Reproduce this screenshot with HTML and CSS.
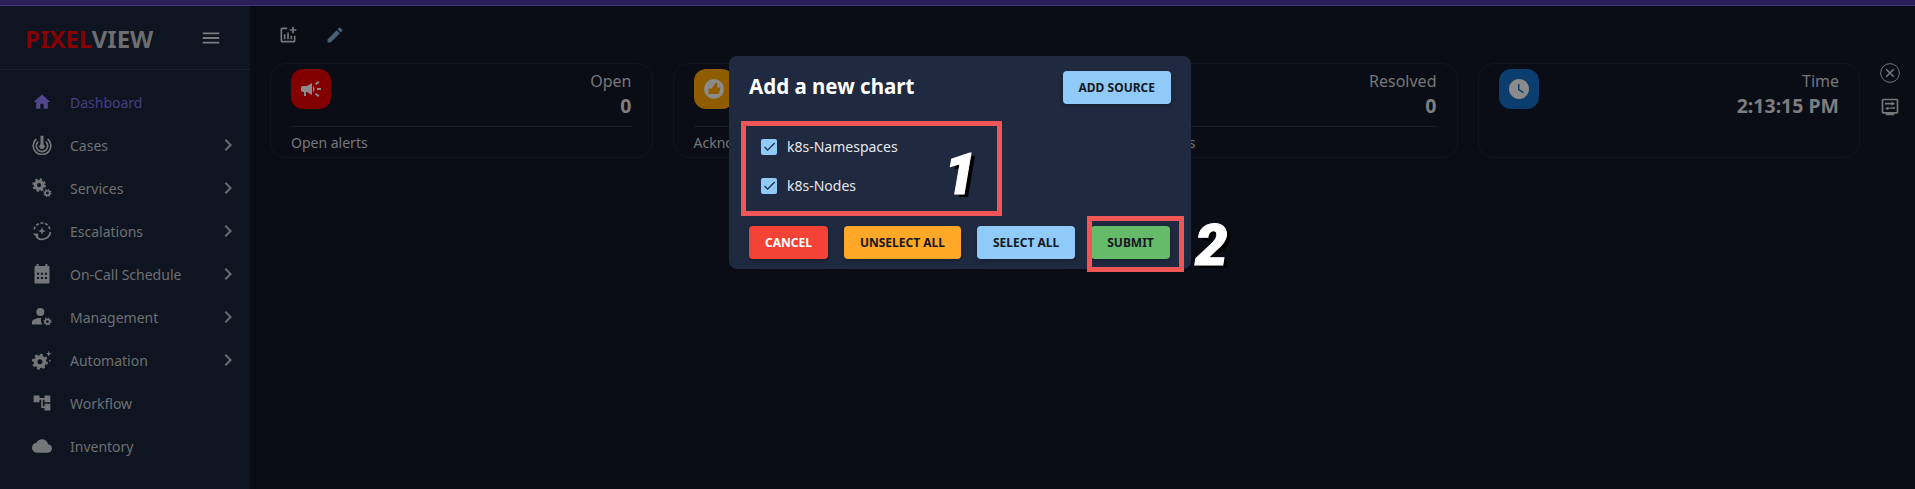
FILE: index.html
```html
<!DOCTYPE html>
<html>
<head lang="en">
    <meta charset="UTF-8">
    <title>PixelView</title>
    <link rel="stylesheet" href="styles.css">
</head>
<body>
<div class="topbar"></div>
<div class="app">
    <div class="sidebar">
        <div class="brand">
            <div class="logo"><span class="logo-red">PIXEL</span>VIEW</div>
            <svg class="menu-icon" viewBox="0 0 24 24"><path d="M3 18h18v-2H3zm0-5h18v-2H3zm0-7v2h18V6z"/></svg>
        </div>
        <div class="nav">
            <div class="nav-item active">
                <svg class="nav-icon" viewBox="0 0 24 24"><path d="M10 20v-6h4v6h5v-8h3L12 3 2 12h3v8z"/></svg>
                <span class="nav-text">Dashboard</span>
            </div>
            <div class="nav-item">
                <svg class="nav-icon" viewBox="0 0 24 24"><path d="M10.200 1h3.600v10a3.200 3.200 0 1 1-3.600 0z"/><path class="line" d="M7.500 8a6.800 6.800 0 1 0 9 0M5.200 4.800a10.600 10.600 0 1 0 13.600 0"/></svg>
                <span class="nav-text">Cases</span>
                <svg class="chevron" viewBox="0 0 24 24"><path d="M10 6 8.590 7.410 13.170 12l-4.580 4.590L10 18l6-6z"/></svg>
            </div>
            <div class="nav-item">
                <svg class="nav-icon" viewBox="0 0 24 24"><circle class="teeth" cx="8.500" cy="8.500" r="7"/><circle class="ring" cx="8.500" cy="8.500" r="4.500"/><circle class="teeth small" cx="18.500" cy="18" r="4.200"/><circle class="ring small" cx="18.500" cy="18" r="2.700"/></svg>
                <span class="nav-text">Services</span>
                <svg class="chevron" viewBox="0 0 24 24"><path d="M10 6 8.590 7.410 13.170 12l-4.580 4.590L10 18l6-6z"/></svg>
            </div>
            <div class="nav-item">
                <svg class="nav-icon" viewBox="0 0 24 24"><path class="line dash" d="M2.500 10A9.800 9.800 0 0 1 21.600 10"/><path class="line" d="M22 13A10 10 0 0 1 5 19"/><path d="M1 15h6.500v6.500zM12 7.500l1.300 3.200 3.200 1.300-3.200 1.300-1.300 3.200-1.300-3.200L7.500 12l3.200-1.300z"/></svg>
                <span class="nav-text">Escalations</span>
                <svg class="chevron" viewBox="0 0 24 24"><path d="M10 6 8.590 7.410 13.170 12l-4.580 4.590L10 18l6-6z"/></svg>
            </div>
            <div class="nav-item">
                <svg class="nav-icon" viewBox="0 0 24 24"><path fill-rule="evenodd" d="M5.500 0h2.400v2.500h8.200V0h2.400v2.500h1c1 0 1.500.6 1.500 1.500v18c0 .9-.5 1.500-1.500 1.500h-15c-1 0-1.500-.6-1.500-1.500V4c0-.9.5-1.500 1.500-1.500h1zM6 10.500v2.500h2.500v-2.500zm4.700 0v2.500h2.500v-2.500zm4.800 0v2.500H18v-2.500zM6 15.500V18h2.500v-2.500zm4.700 0V18h2.500v-2.500zm4.800 0V18H18v-2.500z"/></svg>
                <span class="nav-text">On-Call Schedule</span>
                <svg class="chevron" viewBox="0 0 24 24"><path d="M10 6 8.590 7.410 13.170 12l-4.580 4.590L10 18l6-6z"/></svg>
            </div>
            <div class="nav-item">
                <svg class="nav-icon" viewBox="0 0 24 24"><circle cx="10" cy="6" r="4.800"/><path d="M0 21v-2.800c0-3 5-5.200 11-5-.8 2.500-.3 5.500 1.500 7.800z"/><circle class="teeth small" cx="18.500" cy="17.500" r="4.200"/><circle class="ring small" cx="18.500" cy="17.500" r="2.700"/></svg>
                <span class="nav-text">Management</span>
                <svg class="chevron" viewBox="0 0 24 24"><path d="M10 6 8.590 7.410 13.170 12l-4.580 4.590L10 18l6-6z"/></svg>
            </div>
            <div class="nav-item">
                <svg class="nav-icon" viewBox="0 0 24 24"><circle class="teeth big" cx="9.500" cy="14" r="8.300"/><circle class="ring big" cx="9.500" cy="14" r="5.300"/><path d="M20 1l.9 2.600 2.600.9-2.600.9L20 8l-.9-2.600-2.600-.9 2.600-.9zM21.500 11l.5 1.500 1.500.5-1.500.5-.5 1.500-.5-1.500-1.500-.5 1.500-.5z"/></svg>
                <span class="nav-text">Automation</span>
                <svg class="chevron" viewBox="0 0 24 24"><path d="M10 6 8.590 7.410 13.170 12l-4.580 4.590L10 18l6-6z"/></svg>
            </div>
            <div class="nav-item">
                <svg class="nav-icon" viewBox="0 0 24 24"><path d="M22 11V3h-7v3H9V3H2v8h7V8h2v10h4v3h7v-8h-7v3h-2V8h2v3z"/></svg>
                <span class="nav-text">Workflow</span>
            </div>
            <div class="nav-item">
                <svg class="nav-icon" viewBox="0 0 24 24"><path d="M19.350 10.040C18.670 6.590 15.640 4 12 4 9.110 4 6.600 5.640 5.350 8.040 2.340 8.360 0 10.910 0 14c0 3.310 2.690 6 6 6h13c2.760 0 5-2.240 5-5 0-2.640-2.050-4.780-4.650-4.960z"/></svg>
                <span class="nav-text">Inventory</span>
            </div>
        </div>
    </div>
    <div class="main">
        <div class="toolbar">
            <svg class="tool-icon" viewBox="0 0 24 24"><path d="M22 5v2h-3v3h-2V7h-3V5h3V2h2v3zm-3 14H5V5h6V3H5c-1.100 0-2 .9-2 2v14c0 1.100.9 2 2 2h14c1.100 0 2-.9 2-2v-6h-2zm-4-6v4h2v-4zm-4 4h2V9h-2zm-2 0v-6H7v6z"/></svg>
            <svg class="tool-icon edit" viewBox="0 0 24 24"><path d="M3 17.250V21h3.750L17.810 9.940l-3.750-3.750zM20.710 7.040c.39-.39.39-1.020 0-1.410l-2.340-2.340a.996.996 0 0 0-1.410 0l-1.830 1.830 3.750 3.750z"/></svg>
        </div>
        <div class="content">
            <div class="cards">
                <div class="card">
                    <div class="card-top">
                        <div class="badge red">
                            <svg viewBox="0 0 24 24"><path d="M18 11v2h4v-2zm-2 6.610c.96.71 2.210 1.650 3.200 2.390.4-.53.8-1.070 1.200-1.600-.99-.74-2.240-1.680-3.200-2.400-.4.54-.8 1.080-1.200 1.610zM20.400 5.600c-.4-.53-.8-1.070-1.200-1.600-.99.74-2.240 1.680-3.200 2.400.4.53.8 1.070 1.200 1.600.96-.72 2.210-1.650 3.200-2.400zM4 9c-1.100 0-2 .9-2 2v2c0 1.100.9 2 2 2h1v4h2v-4h1l5 3V6L8 9zm11.500 3c0-1.330-.58-2.530-1.500-3.350v6.690c.92-.81 1.500-2.010 1.500-3.340z"/></svg>
                        </div>
                        <div class="stat">
                            <div class="stat-label">Open</div>
                            <div class="stat-value">0</div>
                        </div>
                    </div>
                    <div class="card-foot">Open alerts</div>
                </div>
                <div class="card">
                    <div class="card-top">
                        <div class="badge orange">
                            <svg viewBox="0 0 24 24"><circle cx="12" cy="12" r="10"/><path class="thumb" d="M6.500 11.500h3.200L14 5.500c1.200.3 1.800 1.200 1.500 2.400l-.6 2.600h3.600l-1.600 6.500H6.500z"/></svg>
                        </div>
                        <div class="stat">
                            <div class="stat-label">Acknowledged</div>
                            <div class="stat-value">0</div>
                        </div>
                    </div>
                    <div class="card-foot">Acknowledged alerts</div>
                </div>
                <div class="card">
                    <div class="card-top">
                        <div class="badge green"></div>
                        <div class="stat">
                            <div class="stat-label">Resolved</div>
                            <div class="stat-value">0</div>
                        </div>
                    </div>
                    <div class="card-foot">Resolved alerts</div>
                </div>
                <div class="card">
                    <div class="card-top no-line">
                        <div class="badge blue">
                            <svg viewBox="0 0 24 24"><path d="M11.990 2C6.470 2 2 6.480 2 12s4.470 10 9.990 10C17.520 22 22 17.520 22 12S17.520 2 11.990 2zM16.200 16.200 11 13V7h1.500v5.200l4.500 2.700z"/></svg>
                        </div>
                        <div class="stat">
                            <div class="stat-label">Time</div>
                            <div class="stat-value">2:13:15 PM</div>
                        </div>
                    </div>
                </div>
            </div>
            <div class="rail">
                <svg class="rail-icon" viewBox="0 0 24 24"><circle class="line thin" cx="12" cy="12" r="11.200"/><path class="line" d="M7.500 7.500l9 9M16.500 7.500l-9 9"/></svg>
                <svg class="rail-icon" viewBox="0 0 24 24"><path fill-rule="evenodd" d="M4 2h16c1.100 0 2 .9 2 2v14c0 1.100-.9 2-2 2h-3v2H7v-2H4c-1.100 0-2-.9-2-2V4c0-1.100.9-2 2-2zm0 2v14h16V4zm2 3h8V5.500l4 2.500-4 2.500V9H6zm12 5v2h-8v1.500L6 14l4-2.500V13z"/></svg>
            </div>
        </div>
    </div>
</div>

<div class="modal">
    <div class="modal-head">
        <h2 class="modal-title">Add a new chart</h2>
        <button class="btn blue-btn">Add source</button>
    </div>
    <div class="check-list">
        <label class="check-row">
            <span class="checkbox"><svg viewBox="0 0 24 24"><path d="M9 16.200 4.800 12l-1.400 1.400L9 19 21 7l-1.400-1.400z"/></svg></span>
            k8s-Namespaces
        </label>
        <label class="check-row">
            <span class="checkbox"><svg viewBox="0 0 24 24"><path d="M9 16.200 4.800 12l-1.400 1.400L9 19 21 7l-1.400-1.400z"/></svg></span>
            k8s-Nodes
        </label>
    </div>
    <div class="modal-foot">
        <button class="btn red-btn">Cancel</button>
        <button class="btn orange-btn">Unselect all</button>
        <button class="btn blue-btn">Select all</button>
        <button class="btn green-btn">Submit</button>
    </div>
</div>

<div class="mark mark-list"></div>
<div class="mark mark-submit"></div>
<div class="mark-num num-one">1</div>
<div class="mark-num num-two">2</div>
</body>
</html>
```

FILE: styles.css
```css
*{
    margin: 0;
    padding: 0;
    box-sizing: border-box;
}
html,body{
    height: 100%;
    overflow: hidden;
}
body{
    position: relative;
    background: #0a0d16;
    color: #6e7074;
    font-family: "Noto Sans", "Open Sans", sans-serif;
    font-size: 14px;
    display: flex;
    flex-direction: column;
}
.topbar{
    height: 6px;
    flex: none;
    background: #2a1f58;
    border-bottom: 1px solid #413679;
}
.app{
    flex: 1;
    display: flex;
    min-height: 0;
}

/* sidebar */
.sidebar{
    width: 250px;
    flex: none;
    background: #0e1520;
}
.brand{
    height: 64px;
    display: flex;
    align-items: center;
    justify-content: space-between;
    padding: 0 28px 0 25px;
    border-bottom: 1px solid #1a212d;
}
.logo{
    font-size: 24px;
    font-weight: 700;
    color: #6d6e70;
    line-height: 1;
    margin-top: 2px;
}
.logo-red{
    color: #860004;
}
.menu-icon{
    width: 22px;
    height: 22px;
    fill: #7a7b7d;
}
.nav{
    padding-top: 10.500px;
}
.nav-item{
    height: 43px;
    display: flex;
    align-items: center;
    padding: 0 10px 0 32px;
}
.nav-icon{
    width: 20px;
    height: 20px;
    flex: none;
    fill: #757679;
    margin-right: 18px;
}
.nav-text{
    flex: 1;
    white-space: nowrap;
}
.nav-item.active .nav-icon{
    fill: #52478f;
}
.nav-item.active .nav-text{
    color: #473e85;
}
.chevron{
    width: 24px;
    height: 24px;
    flex: none;
    fill: #6a6b6e;
}
.line{
    fill: none;
    stroke: #757679;
    stroke-width: 2;
}
.line.dash{
    stroke-dasharray: 3.500 2;
}
.line.thin{
    stroke-width: 1.200;
}
.teeth{
    fill: none;
    stroke: #757679;
    stroke-width: 2.400;
    stroke-dasharray: 2.750 2.750;
}
.teeth.small{
    stroke-width: 1.500;
    stroke-dasharray: 1.650 1.650;
}
.teeth.big{
    stroke-width: 2.600;
    stroke-dasharray: 3.260 3.260;
}
.ring{
    fill: none;
    stroke: #757679;
    stroke-width: 4;
}
.ring.small{
    stroke-width: 2;
}
.ring.big{
    stroke-width: 4.600;
}

/* main area */
.main{
    flex: 1;
    min-width: 0;
}
.toolbar{
    height: 57px;
    display: flex;
    align-items: center;
    gap: 27px;
    padding-left: 28px;
}
.tool-icon{
    width: 20px;
    height: 20px;
    fill: #77787b;
}
.tool-icon.edit{
    fill: #466078;
}
.content{
    display: flex;
    padding-left: 20px;
}
.cards{
    width: 1590px;
    flex: none;
    display: grid;
    grid-template-columns: repeat(4, 1fr);
    gap: 20px;
}
.card{
    height: 95px;
    border: 1px solid #11151f;
    border-radius: 16px;
    padding: 5px 20px 0;
}
.card-top{
    height: 58px;
    display: flex;
    justify-content: space-between;
    border-bottom: 1px solid #1a1e29;
}
.card-top.no-line{
    border-bottom: 0;
}
.badge{
    width: 40px;
    height: 40px;
    border-radius: 12px;
    display: flex;
    align-items: center;
    justify-content: center;
}
.badge svg{
    width: 24px;
    height: 24px;
    fill: #8b8b8b;
}
.badge.red{
    background: #830000;
}
.badge.orange{
    background: #8f5c00;
}
.badge.green{
    background: #1d5a20;
}
.badge.blue{
    background: #0b3d6e;
}
.thumb{
    fill: #8f5c00;
}
.stat{
    text-align: right;
}
.stat-label{
    font-size: 16px;
    line-height: 24px;
    color: #76777a;
}
.stat-value{
    font-size: 19.500px;
    font-weight: 700;
    line-height: 26px;
    color: #7d7e80;
}
.card-foot{
    font-size: 14px;
    line-height: 20px;
    margin-top: 6px;
    color: #76777a;
}
.rail{
    display: flex;
    flex-direction: column;
    align-items: center;
    gap: 14px;
    margin-left: 20px;
}
.rail-icon{
    width: 20px;
    height: 20px;
    fill: #77787b;
}

/* modal */
.modal{
    position: absolute;
    left: 729px;
    top: 56px;
    width: 462px;
    height: 213px;
    background: #1f2940;
    border-radius: 8px;
    padding: 15px 20px 10px;
    display: flex;
    flex-direction: column;
    color: #fff;
}
.modal-head{
    display: flex;
    align-items: flex-start;
    justify-content: space-between;
}
.modal-title{
    font-size: 20.500px;
    font-weight: 700;
    line-height: 30px;
}
.check-list{
    flex: 1;
    padding: 23px 0 0 12px;
}
.check-row{
    height: 39px;
    display: flex;
    align-items: center;
    gap: 10px;
    font-size: 14px;
    color: #e6e8ec;
}
.checkbox{
    width: 16px;
    height: 16px;
    border-radius: 2px;
    background: #90caf9;
    display: flex;
    align-items: center;
    justify-content: center;
}
.checkbox svg{
    width: 15px;
    height: 15px;
    fill: #1f2940;
}
.modal-foot{
    display: flex;
    gap: 16px;
}
.btn{
    height: 33px;
    border: 0;
    border-radius: 4px;
    padding: 0 16px;
    font-family: inherit;
    font-size: 12px;
    font-weight: 700;
    text-transform: uppercase;
    white-space: nowrap;
    color: #141820;
    box-shadow: 0 2px 4px rgba(0,0,0,.25);
}
.red-btn{
    background: #f44336;
    color: #fff;
}
.orange-btn{
    background: #ffa726;
}
.blue-btn{
    background: #90caf9;
}
.green-btn{
    background: #66bb6a;
}

/* red marks drawn over the screenshot */
.mark{
    position: absolute;
    border: 5px solid #f25555;
}
.mark-list{
    left: 741px;
    top: 121px;
    width: 261px;
    height: 95px;
}
.mark-submit{
    left: 1087px;
    top: 216px;
    width: 97px;
    height: 56px;
}
.mark-num{
    position: absolute;
    font-family: Roboto, sans-serif;
    font-size: 58px;
    font-weight: 900;
    font-style: italic;
    line-height: 1;
    color: #fff;
    -webkit-text-stroke: 1px #fff;
    text-shadow: 4px 3px 0 #000;
}
.num-one{
    left: 944px;
    top: 145px;
}
.num-two{
    left: 1195px;
    top: 216px;
}
```
